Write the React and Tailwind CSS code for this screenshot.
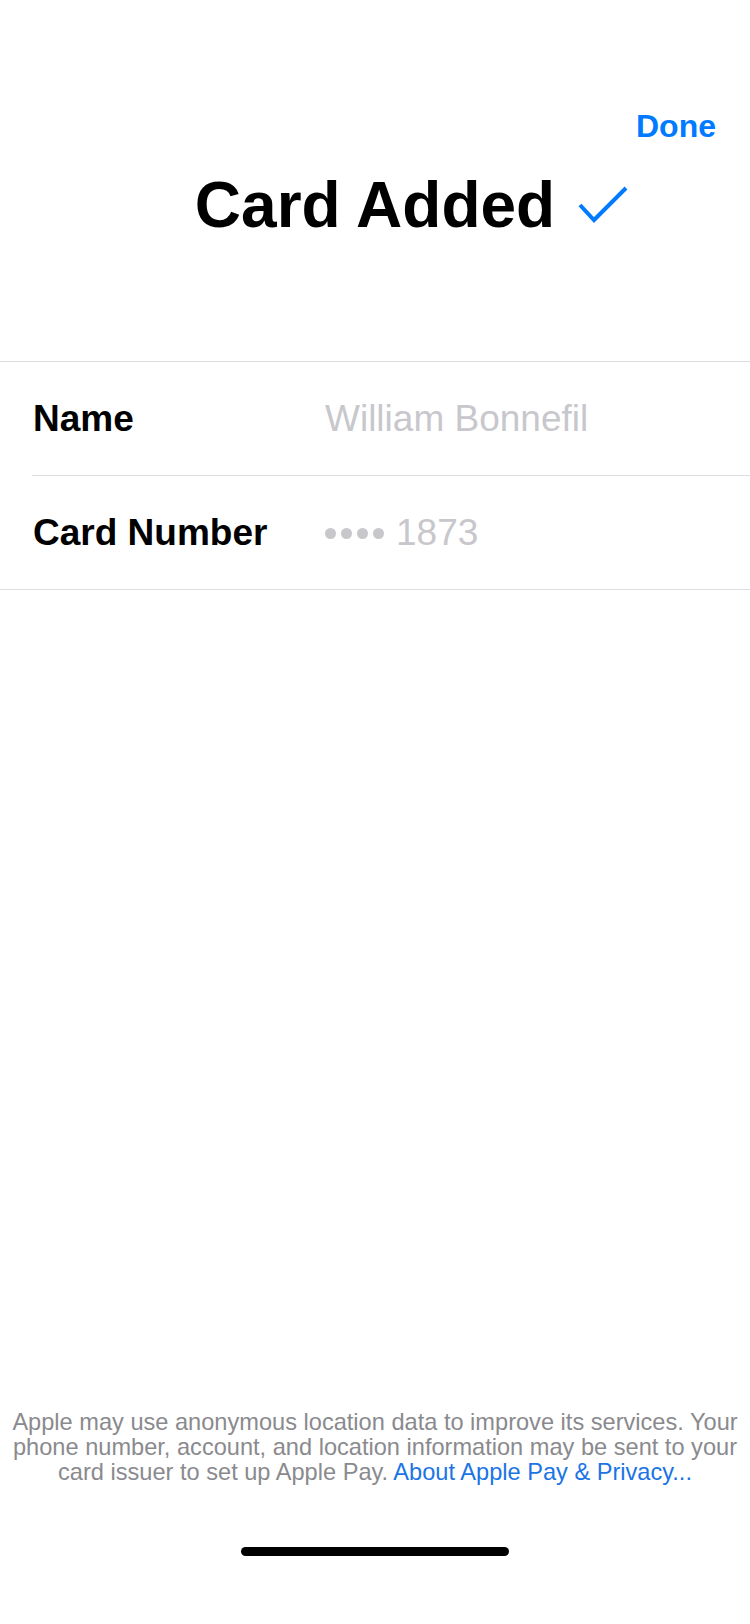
const rows = [
  { label: 'Name', value: 'William Bonnefil' },
  { label: 'Card Number', value: '1873', masked: true },
];

const Check = () => (
  <svg
    className="absolute left-[calc(100%+23px)] top-[12px]"
    width="50"
    height="38"
    viewBox="0 0 50 38"
    fill="none"
  >
    <path d="M2 19 L16 34 L48 2" stroke="#007aff" strokeWidth="4" strokeLinejoin="miter" />
  </svg>
);

export default function App() {
  return (
    <div className="min-h-[1624px] flex flex-col bg-white font-['Liberation_Sans',Arial,sans-serif] text-black">
      <div className="pt-[111px] pr-[34px] flex justify-end">
        <button className="text-[32px] leading-[31px] font-semibold text-[#007aff]">Done</button>
      </div>

      <div className="mt-[32px] flex justify-center">
        <h1 className="relative text-[64px] leading-[63px] font-bold">
          Card Added
          <Check />
        </h1>
      </div>

      <div className="mt-[124px] border-t border-b border-[#dedee2]">
        {rows.map((row, i) => (
          <div key={row.label} className={i > 0 ? 'ml-[32px] border-t border-[#dedee2]' : 'pl-[32px]'}>
            <div className="h-[113px] flex items-center">
              <span className="w-[293px] shrink-0 pl-[1px] text-[37px] font-semibold">{row.label}</span>
              <span className="flex items-center text-[37px] text-[#c7c7cc]">
                {row.masked && (
                  <span className="flex gap-[5px] mr-[12px] mt-[2px]">
                    <span className="w-[11px] h-[11px] rounded-full bg-[#c7c7cc]" />
                    <span className="w-[11px] h-[11px] rounded-full bg-[#c7c7cc]" />
                    <span className="w-[11px] h-[11px] rounded-full bg-[#c7c7cc]" />
                    <span className="w-[11px] h-[11px] rounded-full bg-[#c7c7cc]" />
                  </span>
                )}
                {row.value}
              </span>
            </div>
          </div>
        ))}
      </div>

      <div className="flex-1" />

      <p className="text-center text-[23.6px] leading-[25px] text-[#8a8a8e] whitespace-nowrap">
        Apple may use anonymous location data to improve its services. Your
        <br />
        phone number, account, and location information may be sent to your
        <br />
        card issuer to set up Apple Pay. <span className="text-[#1b74e4]">About Apple Pay &amp; Privacy...</span>
      </p>

      <div className="mt-[62px] mb-[68px] flex justify-center">
        <div className="w-[268px] h-[9px] rounded-full bg-black" />
      </div>
    </div>
  );
}
